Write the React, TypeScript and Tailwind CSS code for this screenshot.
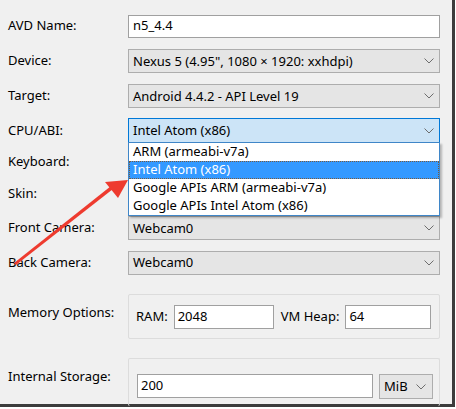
import React from "react";

const font = { fontFamily: '"Noto Sans", "Segoe UI", sans-serif' };

function Chevron() {
  return (
    <svg width="10" height="6" viewBox="0 0 10 6" className="shrink-0">
      <path d="M0.5 0.5 L5 5 L9.5 0.5" fill="none" stroke="#6d6d6d" strokeWidth="1" />
    </svg>
  );
}

function Select({ text, active }: { text: string; active?: boolean }) {
  return (
    <div
      className={
        active
          ? "flex h-[25px] w-[312px] items-center justify-between border border-[#0078d7] bg-[#cce4f7] pl-[4px] pr-[5px]"
          : "flex h-[24px] w-[312px] items-center justify-between border border-[#adadad] bg-[#e5e5e5] pl-[4px] pr-[5px]"
      }
    >
      <span className="text-[13px] leading-none text-black">{text}</span>
      <Chevron />
    </div>
  );
}

function Row({ label, children }: { label: string; children?: React.ReactNode }) {
  return (
    <div className="flex h-[24px] items-center">
      <div className="w-[120px] text-[13px] text-black">{label}</div>
      {children}
    </div>
  );
}

const deviceText = 'Nexus 5 (4.95", 1080 × 1920: xxhdpi)';

export default function App() {
  return (
    <div className="h-[409px] w-[456px] bg-white" style={font}>
      <div className="relative h-[407px] w-[455px] border-b-[3px] border-r-[3px] border-[#3c3c3c] bg-[#f0f0f0] pl-[8px] pt-[14px]">
        <div className="flex flex-col">
          <Row label="AVD Name:">
            <div className="flex h-[23px] w-[312px] items-center border border-[#a0a0a0] bg-white pl-[4px] text-[13px]">
              n5_4.4
            </div>
          </Row>
          <div className="mt-[11px]">
            <Row label="Device:">
              <Select text={deviceText} />
            </Row>
          </div>
          <div className="mt-[11px]">
            <Row label="Target:">
              <Select text="Android 4.4.2 - API Level 19" />
            </Row>
          </div>
          <div className="mt-[10px]">
            <div className="flex h-[25px] items-center">
              <div className="w-[120px] text-[13px]">CPU/ABI:</div>
              <Select text="Intel Atom (x86)" active />
            </div>
          </div>
          <div className="mt-[7px]">
            <Row label="Keyboard:" />
          </div>
          <div className="mt-[8px]">
            <Row label="Skin:" />
          </div>
          <div className="mt-[10px]">
            <Row label="Front Camera:">
              <Select text="Webcam0" />
            </Row>
          </div>
          <div className="mt-[10px]">
            <div className="flex h-[25px] items-center">
              <div className="w-[120px] text-[13px]">Back Camera:</div>
              <Select text="Webcam0" />
            </div>
          </div>
          <div className="mt-[19px] flex h-[45px]">
            <div className="w-[120px] pt-[9px] text-[13px]">Memory Options:</div>
            <div className="flex h-[45px] w-[312px] items-center rounded-[2px] border border-[#dcdcdc] pl-[7px]">
              <span className="text-[13px]">RAM:</span>
              <div className="ml-[6px] flex h-[24px] w-[100px] items-center border border-[#a0a0a0] bg-white pl-[3px] text-[13px]">
                2048
              </div>
              <span className="ml-[7px] text-[13px]">VM Heap:</span>
              <div className="ml-[6px] flex h-[24px] w-[86px] items-center border border-[#a0a0a0] bg-white pl-[3px] text-[13px]">
                64
              </div>
            </div>
          </div>
          <div className="mt-[19px] flex h-[45px]">
            <div className="w-[120px] pt-[9px] text-[13px]">Internal Storage:</div>
            <div className="flex h-[48px] w-[312px] items-start rounded-[2px] border border-b-0 border-[#dcdcdc] pl-[8px] pt-[15px]">
              <div className="flex h-[24px] w-[236px] items-center border border-[#a0a0a0] bg-white pl-[3px] text-[13px]">
                200
              </div>
              <div className="ml-[6px] flex h-[25px] w-[54px] items-center justify-between border border-[#adadad] bg-[#e5e5e5] pl-[4px] pr-[6px] text-[13px]">
                <span>MiB</span>
                <Chevron />
              </div>
            </div>
          </div>
        </div>

        {/* dropdown list */}
        <div className="absolute left-[128px] top-[142px] w-[312px] border border-[#3f86c8] bg-white shadow-[2px_2px_2px_rgba(0,0,0,0.25)]">
          <div className="flex h-[18px] items-center pl-[4px] text-[13px] text-black">ARM (armeabi-v7a)</div>
          <div className="flex h-[18px] items-center border border-dotted border-[#7a5a3a] bg-[#3399ff] pl-[3px] text-[13px] text-white">
            Intel Atom (x86)
          </div>
          <div className="flex h-[18px] items-center pl-[4px] text-[13px] text-black">Google APIs ARM (armeabi-v7a)</div>
          <div className="flex h-[18px] items-center pl-[4px] text-[13px] text-black">Google APIs Intel Atom (x86)</div>
        </div>

        {/* red arrow */}
        <svg className="pointer-events-none absolute left-0 top-0" width="456" height="409">
          <polygon points="14,263 16,265 113,189 111,186" fill="#ee3b2f" />
          <polygon points="128,180 105,182 118,198" fill="#ee3b2f" />
        </svg>
      </div>
    </div>
  );
}
